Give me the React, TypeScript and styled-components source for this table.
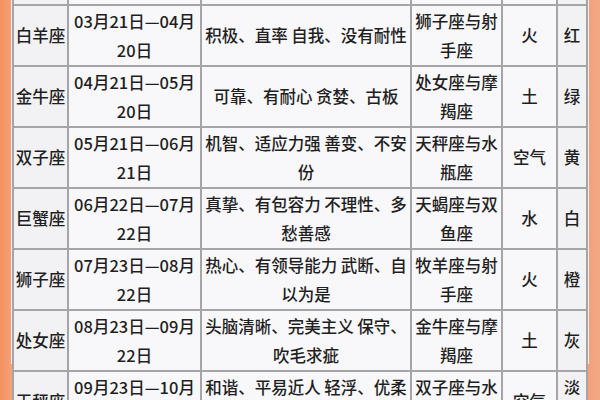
import React, { FC } from "react";
import styled, { createGlobalStyle } from "styled-components";

const GlobalStyle = createGlobalStyle`
  html, body {
    margin: 0;
    padding: 0;
    background: #f39a6c;
  }
  body {
    font-family: "Noto Sans CJK SC", "Noto Sans", sans-serif;
  }
`;

const Frame = styled.div`
  height: 400px;
  overflow: hidden;
  padding: 0 11px;
  background: linear-gradient(90deg, #f3905f 0%, #f6a27a 2%, #f3a07b 98%, #f5a885 100%);
`;

const Sheet = styled.div`
  background: #f6efea;
  padding: 0 1px;
  height: 100%;
`;

const Table = styled.table`
  width: 576px;
  margin-top: -36px;
  border-collapse: collapse;
  table-layout: fixed;
  background: #f8f8fa;
  color: #1f1f1f;
  font-size: 16.5px;
  font-weight: 500;
  line-height: 29px;
`;

const Row = styled.tr<{ head?: boolean }>`
  height: ${({ head }) => (head ? "40px" : "61px")};
`;

const Cell = styled.td<{ shade?: boolean }>`
  padding: 0 1px;
  border: 2px solid #a5a5a7;
  text-align: center;
  vertical-align: middle;
  white-space: nowrap;
  overflow: hidden;
  background: ${({ shade }) => (shade ? "#f2f2f4" : "#f8f8fa")};
`;

interface Sign {
  name: string;
  date: string[];
  trait: string[];
  match: string[];
  element: string;
  color: string[];
}

const signs: Sign[] = [
  { name: "白羊座", date: ["03月21日—04月", "20日"], trait: ["积极、直率 自我、没有耐性"], match: ["狮子座与射", "手座"], element: "火", color: ["红"] },
  { name: "金牛座", date: ["04月21日—05月", "20日"], trait: ["可靠、有耐心 贪婪、古板"], match: ["处女座与摩", "羯座"], element: "土", color: ["绿"] },
  { name: "双子座", date: ["05月21日—06月", "21日"], trait: ["机智、适应力强 善变、不安", "份"], match: ["天秤座与水", "瓶座"], element: "空气", color: ["黄"] },
  { name: "巨蟹座", date: ["06月22日—07月", "22日"], trait: ["真挚、有包容力 不理性、多", "愁善感"], match: ["天蝎座与双", "鱼座"], element: "水", color: ["白"] },
  { name: "狮子座", date: ["07月23日—08月", "22日"], trait: ["热心、有领导能力 武断、自", "以为是"], match: ["牧羊座与射", "手座"], element: "火", color: ["橙"] },
  { name: "处女座", date: ["08月23日—09月", "22日"], trait: ["头脑清晰、完美主义 保守、", "吹毛求疵"], match: ["金牛座与摩", "羯座"], element: "土", color: ["灰"] },
  { name: "天秤座", date: ["09月23日—10月", "23日"], trait: ["和谐、平易近人 轻浮、优柔", "寡断"], match: ["双子座与水", "瓶座"], element: "空气", color: ["淡", "蓝"] },
];

const Lines: FC<{ lines: string[] }> = ({ lines }) => (
  <>
    {lines.map((line, i) => (
      <React.Fragment key={i}>
        {i > 0 && <br />}
        {line}
      </React.Fragment>
    ))}
  </>
);

const App: FC = () => (
  <>
    <GlobalStyle />
    <Frame>
      <Sheet>
        <Table>
          <colgroup>
            <col style={{ width: 55 }} />
            <col style={{ width: 133 }} />
            <col style={{ width: 210 }} />
            <col style={{ width: 91 }} />
            <col style={{ width: 55 }} />
            <col style={{ width: 30 }} />
          </colgroup>
          <tbody>
            {/* header row, scrolled out of view above the top edge */}
            <Row head>
              <Cell shade />
              <Cell />
              <Cell />
              <Cell />
              <Cell />
              <Cell shade />
            </Row>
            {signs.map((s) => (
              <Row key={s.name}>
                <Cell shade>{s.name}</Cell>
                <Cell>
                  <Lines lines={s.date} />
                </Cell>
                <Cell>
                  <Lines lines={s.trait} />
                </Cell>
                <Cell>
                  <Lines lines={s.match} />
                </Cell>
                <Cell>{s.element}</Cell>
                <Cell shade>
                  <Lines lines={s.color} />
                </Cell>
              </Row>
            ))}
          </tbody>
        </Table>
      </Sheet>
    </Frame>
  </>
);

export default App;
